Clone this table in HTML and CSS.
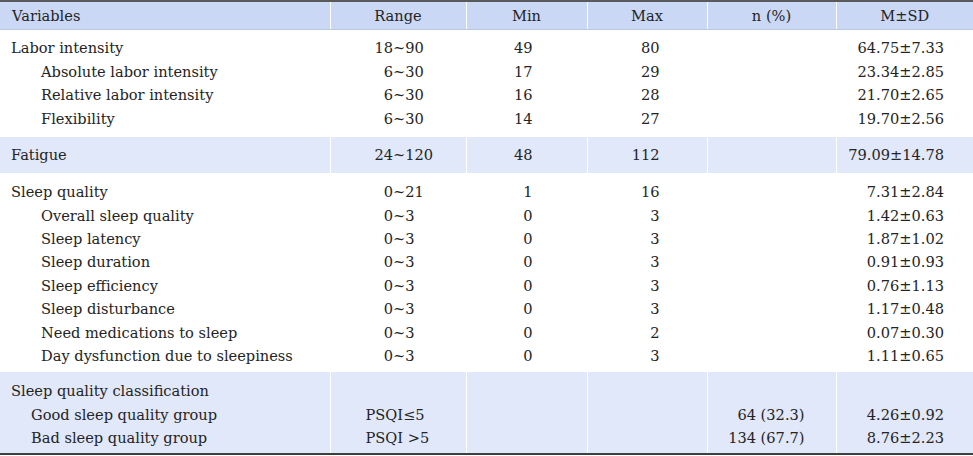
FILE: index.html
```html
<!DOCTYPE html>
<html lang="en">
<head>
<meta charset="utf-8">
<title>Descriptive statistics</title>
<link rel="stylesheet" href="styles.css">
</head>
<body>
<table class="stats">
  <colgroup>
    <col class="c-var">
    <col class="c-range">
    <col class="c-min">
    <col class="c-max">
    <col class="c-n">
    <col class="c-msd">
  </colgroup>
  <thead>
    <tr>
      <th class="var">Variables</th>
      <th>Range</th>
      <th>Min</th>
      <th>Max</th>
      <th>n (%)</th>
      <th>M±SD</th>
    </tr>
  </thead>
  <tbody class="grp g-labor">
    <tr>
      <td class="var">Labor intensity</td>
      <td class="range">18~90</td>
      <td class="min">49</td>
      <td class="max">80</td>
      <td class="n"></td>
      <td class="msd">64.75±7.33</td>
    </tr>
    <tr>
      <td class="var sub">Absolute labor intensity</td>
      <td class="range">&#8199;6~30</td>
      <td class="min">17</td>
      <td class="max">29</td>
      <td class="n"></td>
      <td class="msd">23.34±2.85</td>
    </tr>
    <tr>
      <td class="var sub">Relative labor intensity</td>
      <td class="range">&#8199;6~30</td>
      <td class="min">16</td>
      <td class="max">28</td>
      <td class="n"></td>
      <td class="msd">21.70±2.65</td>
    </tr>
    <tr>
      <td class="var sub">Flexibility</td>
      <td class="range">&#8199;6~30</td>
      <td class="min">14</td>
      <td class="max">27</td>
      <td class="n"></td>
      <td class="msd">19.70±2.56</td>
    </tr>
  </tbody>
  <tbody class="grp shaded g-fatigue">
    <tr>
      <td class="var">Fatigue</td>
      <td class="range">24~120</td>
      <td class="min">48</td>
      <td class="max">112</td>
      <td class="n"></td>
      <td class="msd">79.09±14.78</td>
    </tr>
  </tbody>
  <tbody class="grp g-sleep">
    <tr>
      <td class="var">Sleep quality</td>
      <td class="range">&#8199;0~21</td>
      <td class="min">1</td>
      <td class="max">16</td>
      <td class="n"></td>
      <td class="msd">7.31±2.84</td>
    </tr>
    <tr>
      <td class="var sub">Overall sleep quality</td>
      <td class="range">&#8199;0~3</td>
      <td class="min">0</td>
      <td class="max">3</td>
      <td class="n"></td>
      <td class="msd">1.42±0.63</td>
    </tr>
    <tr>
      <td class="var sub">Sleep latency</td>
      <td class="range">&#8199;0~3</td>
      <td class="min">0</td>
      <td class="max">3</td>
      <td class="n"></td>
      <td class="msd">1.87±1.02</td>
    </tr>
    <tr>
      <td class="var sub">Sleep duration</td>
      <td class="range">&#8199;0~3</td>
      <td class="min">0</td>
      <td class="max">3</td>
      <td class="n"></td>
      <td class="msd">0.91±0.93</td>
    </tr>
    <tr>
      <td class="var sub">Sleep efficiency</td>
      <td class="range">&#8199;0~3</td>
      <td class="min">0</td>
      <td class="max">3</td>
      <td class="n"></td>
      <td class="msd">0.76±1.13</td>
    </tr>
    <tr>
      <td class="var sub">Sleep disturbance</td>
      <td class="range">&#8199;0~3</td>
      <td class="min">0</td>
      <td class="max">3</td>
      <td class="n"></td>
      <td class="msd">1.17±0.48</td>
    </tr>
    <tr>
      <td class="var sub">Need medications to sleep</td>
      <td class="range">&#8199;0~3</td>
      <td class="min">0</td>
      <td class="max">2</td>
      <td class="n"></td>
      <td class="msd">0.07±0.30</td>
    </tr>
    <tr>
      <td class="var sub">Day dysfunction due to sleepiness</td>
      <td class="range">&#8199;0~3</td>
      <td class="min">0</td>
      <td class="max">3</td>
      <td class="n"></td>
      <td class="msd">1.11±0.65</td>
    </tr>
  </tbody>
  <tbody class="grp shaded g-class">
    <tr>
      <td class="var">Sleep quality classification</td>
      <td class="range"></td>
      <td class="min"></td>
      <td class="max"></td>
      <td class="n"></td>
      <td class="msd"></td>
    </tr>
    <tr>
      <td class="var sub2">Good sleep quality group</td>
      <td class="range psqi">PSQI≤5</td>
      <td class="min"></td>
      <td class="max"></td>
      <td class="n">64 (32.3)</td>
      <td class="msd">4.26±0.92</td>
    </tr>
    <tr>
      <td class="var sub2">Bad sleep quality group</td>
      <td class="range psqi">PSQI &gt;5</td>
      <td class="min"></td>
      <td class="max"></td>
      <td class="n">134 (67.7)</td>
      <td class="msd">8.76±2.23</td>
    </tr>
  </tbody>
</table>
</body>
</html>
```
FILE: styles.css
```css
html, body {
  margin: 0;
  padding: 0;
  background: #ffffff;
}

body {
  font-family: "DejaVu Serif", "Liberation Serif", serif;
  font-size: 14.6px;
  color: #242424;
}

.stats {
  width: 973px;
  border-collapse: collapse;
  table-layout: fixed;
  border-top: 2px solid #5a5a5a;
  border-bottom: 2px solid #3f3f3f;
}

.c-var { width: 330px; }
.c-range { width: 136px; }
.c-min { width: 121px; }
.c-max { width: 120px; }
.c-n { width: 129px; }
.c-msd { width: 137px; }

.stats th,
.stats td {
  padding: 0;
  white-space: nowrap;
  border-left: 1px solid #ffffff;
  line-height: 23.4px;
}

.stats th:first-child,
.stats td:first-child {
  border-left: none;
}

.stats thead th {
  background: #cad8f6;
  font-weight: normal;
  text-align: center;
  height: 27px;
  line-height: 27px;
  border-bottom: 1px solid #bcc7e0;
}

.stats thead th.var {
  text-align: left;
  padding-left: 12px;
}

.g-labor tr:first-child td { padding-top: 6.3px; }
.g-labor tr:last-child td { padding-bottom: 7.1px; }

.g-fatigue tr td { padding-top: 6.4px; padding-bottom: 6.2px; }

.g-sleep tr:first-child td { padding-top: 7.1px; }
.g-sleep tr:last-child td { padding-bottom: 4.7px; }

.g-class tr:first-child td { padding-top: 7.2px; }
.g-class tr:last-child td { padding-bottom: 3.6px; }

.shaded td {
  background: #e1e8f9;
}

.stats td.var {
  text-align: left;
  padding-left: 11px;
}

.stats td.sub { padding-left: 41px; }
.stats td.sub2 { padding-left: 31px; }

.range {
  text-align: left;
}
.stats td.range { padding-left: 44px; }
.stats td.range.psqi { padding-left: 35px; }

.min { text-align: right; }
.stats td.min { padding-right: 54px; }

.max { text-align: right; }
.stats td.max { padding-right: 47px; }

.n { text-align: right; }
.stats td.n { padding-right: 31px; }

.msd { text-align: right; }
.stats td.msd { padding-right: 29px; }
```
